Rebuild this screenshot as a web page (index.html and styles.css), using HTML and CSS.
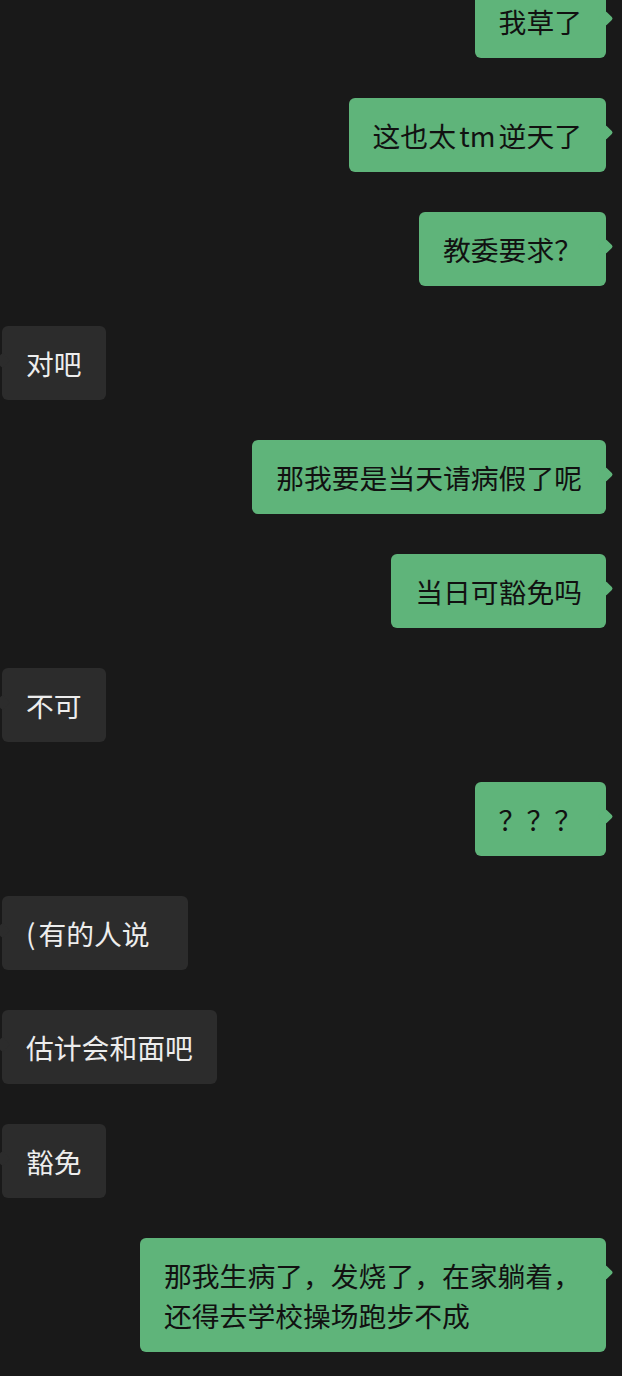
FILE: index.html
```html
<!DOCTYPE html>
<html lang="zh-CN">
<head>
<meta charset="UTF-8">
<title>聊天</title>
<link rel="stylesheet" href="styles.css">
</head>
<body>
<div class="chat">
  <div class="row me"><div class="bubble">我草了</div></div>
  <div class="row me"><div class="bubble">这也太 tm 逆天了</div></div>
  <div class="row me"><div class="bubble">教委要求？</div></div>
  <div class="row them"><div class="bubble">对吧</div></div>
  <div class="row me"><div class="bubble">那我要是当天请病假了呢</div></div>
  <div class="row me"><div class="bubble">当日可豁免吗</div></div>
  <div class="row them"><div class="bubble">不可</div></div>
  <div class="row me"><div class="bubble">？？？</div></div>
  <div class="row them"><div class="bubble"><span class="paren">(</span>有的人说&ensp;</div></div>
  <div class="row them"><div class="bubble">估计会和面吧</div></div>
  <div class="row them"><div class="bubble">豁免</div></div>
  <div class="row me"><div class="bubble">那我生病了，发烧了，在家躺着，还得去学校操场跑步不成</div></div>
</div>
</body>
</html>
```

FILE: styles.css
```css
html,body{margin:0;padding:0;background:#191919}
body{font-family:"Noto Sans CJK SC","Noto Sans",sans-serif;width:622px;height:1376px;overflow:hidden}
.chat{display:flex;flex-direction:column;gap:40px;margin-top:-16px;padding:0 16px 0 2px}
.row{display:flex}
.row.me{justify-content:flex-end}
.row.them{justify-content:flex-start}
.bubble{position:relative;font-size:27.8px;line-height:40px;padding:17px 24px;border-radius:6px;max-width:418px;word-spacing:-3px;white-space:pre-wrap}
.bubble::after{content:"";position:absolute;top:29px;width:11px;height:11px;border-radius:2px;transform:rotate(45deg)}
.paren{margin-right:3px}
.me .bubble{background:#5fb47a;color:#111}
.me .bubble::after{right:-5px;background:#5fb47a}
.them .bubble{background:#2c2c2c;color:#ededed}
.them .bubble::after{left:-5px;background:#2c2c2c}
```
